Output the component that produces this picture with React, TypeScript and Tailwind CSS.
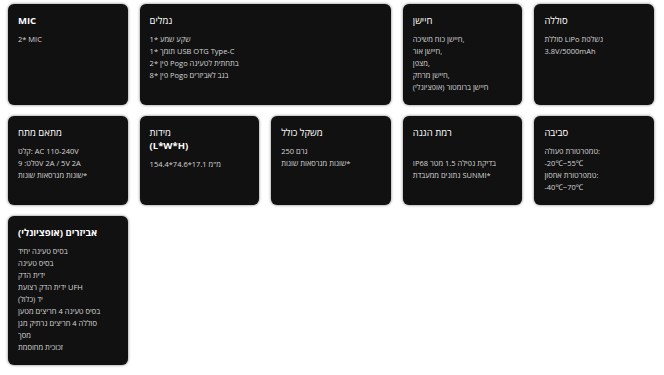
import React from "react";

type Card = { title: string[]; lines: string[]; span?: boolean; bold?: boolean };

const cards: Card[] = [
  { title: ["MIC"], lines: ["2* MIC"], bold: true },
  {
    title: ["נמלים"],
    span: true,
    lines: [
      "1* שקע שמע",
      "1* תומך USB OTG Type-C",
      "2* פין Pogo בתחתית לטעינה",
      "8* פין Pogo בגב לאביזרים",
    ],
  },
  {
    title: ["חיישן"],
    lines: [
      "חיישן כוח משיכה,",
      "חיישן אור,",
      "מצפן,",
      "חיישן מרחק,",
      "חיישן ברומטור (אופציונלי)",
    ],
  },
  { title: ["סוללה"], lines: ["סוללת LiPo נשלפת", "3.8V/5000mAh"] },
  {
    title: ["מתאם מתח"],
    lines: ["קלט: AC 110-240V", "פלט: 9V 2A / 5V 2A", "שונות מגרסאות שונות*"],
  },
  { title: ["מידות", "(L*W*H)"], lines: ["154.4*74.6*17.1 מ\"מ"] },
  { title: ["משקל כולל"], lines: ["250 גרם", "שונות מגרסאות שונות*"] },
  {
    title: ["רמת הגנה"],
    lines: ["", "IP68 בדיקת נפילה 1.5 מטר", "נתונים ממעבדת SUNMI*"],
  },
  {
    title: ["סביבה"],
    lines: ["טמפרטורת פעולה:", "-20℃~55℃", "טמפרטורת אחסון:", "-40℃~70℃"],
  },
  {
    title: ["אביזרים (אופציונלי)"],
    bold: true,
    lines: [
      "בסיס טעינה יחיד",
      "בסיס טעינה",
      "ידית הדק",
      "ידית הדק רצועת UFH",
      "יד (כלול)",
      "בסיס טעינה 4 חריצים מטען",
      "סוללה 4 חריצים נרתיק מגן",
      "מסך",
      "זכוכית מחוסמת",
    ],
  },
];

export default function App() {
  return (
    <div
      className="w-[664px] h-[375px] bg-white overflow-hidden"
      style={{ fontFamily: '"Open Sans", "Noto Sans", "DejaVu Sans", sans-serif' }}
    >
      <div className="grid w-[654px] grid-cols-5 gap-x-3 gap-y-[11px] pl-2 pt-1">
        {cards.map((c, i) => (
          <div
            key={i}
            className={
              (c.span ? "col-span-2 " : "") +
              "rounded-md bg-[#111111] px-[10px] pt-[10px] pb-3 shadow-[0_0_3px_rgba(0,0,0,0.55)]"
            }
          >
            <div className="mb-[6px]">
              {c.title.map((t, j) => (
                <div
                  key={j}
                  className={
                    (c.bold || j > 0 ? "font-bold " : "font-medium ") +
                    "text-[9.5px] leading-[13px] text-white"
                  }
                >
                  {t}
                </div>
              ))}
            </div>
            {c.lines.map((l, j) => (
              <div
                key={j}
                className="h-[12px] whitespace-nowrap text-[7.5px] leading-[12px] text-[#d6d6d6]"
              >
                {l}
              </div>
            ))}
          </div>
        ))}
      </div>
    </div>
  );
}
